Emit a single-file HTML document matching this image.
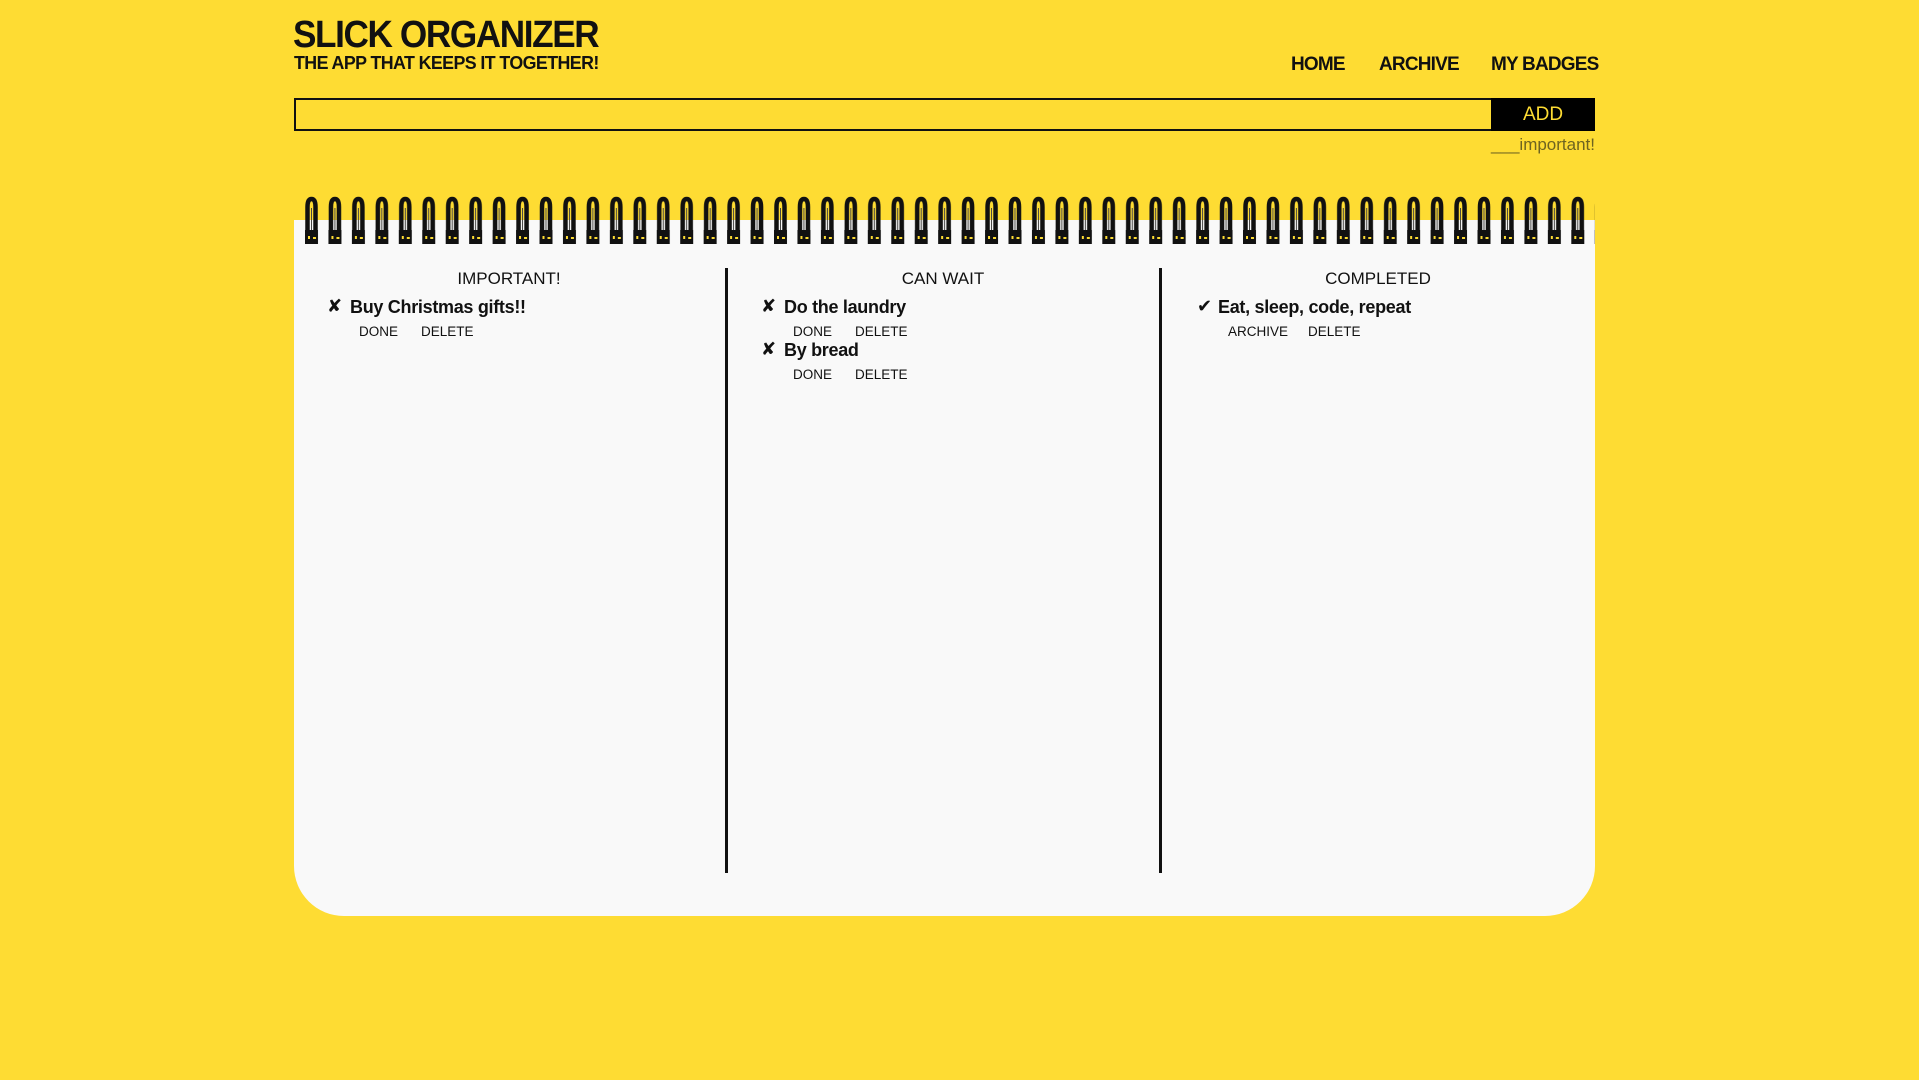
<!DOCTYPE html>
<html><head><meta charset="utf-8">
<style>
html,body{margin:0;padding:0;}
body{width:1919px;height:1080px;background:#FEDC33;position:relative;overflow:hidden;font-family:"Liberation Sans",sans-serif;color:#111;}
.a{position:absolute;white-space:nowrap;}
.title{left:293px;top:14px;font-size:38px;font-weight:bold;letter-spacing:-1.5px;transform:scaleX(0.925);transform-origin:left;}
.sub{left:294px;top:53px;font-size:18px;font-weight:bold;letter-spacing:-0.6px;transform:scaleX(0.99);transform-origin:left;}
.nav{top:54px;font-size:19px;font-weight:bold;letter-spacing:-0.8px;}
.input{left:294px;top:98px;width:1197px;height:29px;border:2px solid #111;box-sizing:content-box;}
.add{left:1491px;top:98px;width:104px;height:33px;background:#000;color:#FEDC33;font-size:19px;text-align:center;line-height:33px;}
.imp{right:324px;top:135px;font-size:17px;color:#6e6420;}
.paper{left:294px;top:220px;width:1301px;height:696px;background:#f9f9f9;border-radius:0 0 50px 50px;}
.div{width:3px;background:#111;top:268px;height:605px;}
.head{top:269px;font-size:17px;transform:translateX(-50%);}
.item{font-size:18px;font-weight:bold;letter-spacing:-0.3px;}
.act{font-size:13.5px;}
.ic{font-size:18px;font-family:"DejaVu Sans",sans-serif;}
</style></head><body>
<div class="a title">SLICK ORGANIZER</div>
<div class="a sub">THE APP THAT KEEPS IT TOGETHER!</div>
<div class="a nav" style="left:1291px">HOME</div>
<div class="a nav" style="left:1379px">ARCHIVE</div>
<div class="a nav" style="left:1491px">MY BADGES</div>
<div class="a input"></div>
<div class="a add">ADD</div>
<div class="a imp">___important!</div>
<div class="a paper"></div>
<svg class="a" style="left:0;top:0" width="1919" height="260">
<defs>
<pattern id="sp" x="305" y="0" width="23.45" height="260" patternUnits="userSpaceOnUse">
<path d="M2.5 234 L2.5 207 Q2.5 199 6.5 199 Q10.5 199 10.5 207 L10.5 234" fill="none" stroke="#111" stroke-width="4.5"/>
<path d="M6.5 232 L6.5 208" fill="none" stroke="#444" stroke-width="1"/>
<rect x="0" y="230" width="13" height="14" fill="#111"/>
<rect x="3" y="236" width="2" height="3" fill="#FEDC33"/>
<rect x="8" y="237" width="3" height="2" fill="#FEDC33"/>
</pattern>
</defs>
<rect x="305" y="196" width="1290" height="50" fill="url(#sp)"/>
</svg>
<div class="a div" style="left:725px"></div>
<div class="a div" style="left:1159px"></div>
<div class="a head" style="left:509px">IMPORTANT!</div>
<div class="a head" style="left:943px">CAN WAIT</div>
<div class="a head" style="left:1378px">COMPLETED</div>

<div class="a ic" style="left:327px;top:296px">✘</div>
<div class="a item" style="left:350px;top:297px">Buy Christmas gifts!!</div>
<div class="a act" style="left:359px;top:324px">DONE</div>
<div class="a act" style="left:421px;top:324px">DELETE</div>

<div class="a ic" style="left:761px;top:296px">✘</div>
<div class="a item" style="left:784px;top:297px">Do the laundry</div>
<div class="a act" style="left:793px;top:324px">DONE</div>
<div class="a act" style="left:855px;top:324px">DELETE</div>
<div class="a ic" style="left:761px;top:339px">✘</div>
<div class="a item" style="left:784px;top:340px">By bread</div>
<div class="a act" style="left:793px;top:367px">DONE</div>
<div class="a act" style="left:855px;top:367px">DELETE</div>

<div class="a ic" style="left:1197px;top:296px">✔</div>
<div class="a item" style="left:1218px;top:297px">Eat, sleep, code, repeat</div>
<div class="a act" style="left:1228px;top:324px">ARCHIVE</div>
<div class="a act" style="left:1308px;top:324px">DELETE</div>
</body></html>
